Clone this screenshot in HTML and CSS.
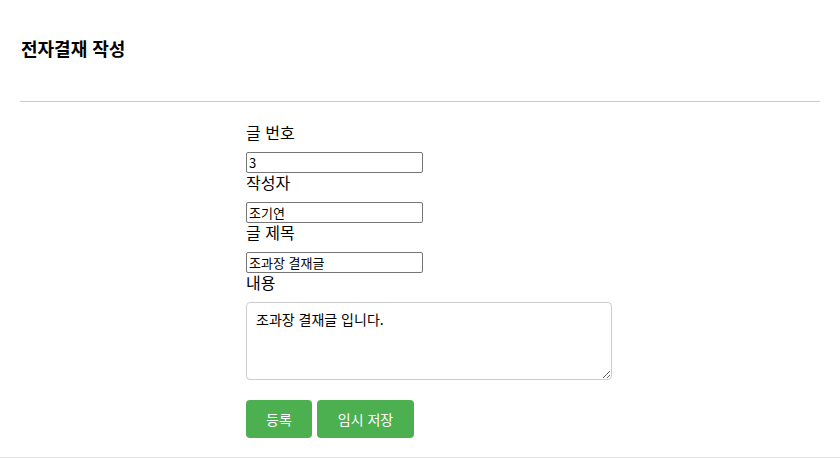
FILE: index.html
```html
<!DOCTYPE html>
<html lang="ko">
<head>
    <meta charset="UTF-8">
    <meta name="viewport" content="width=device-width, initial-scale=1.0">
    <title>전자결재 작성</title>
    <link rel="stylesheet" href="styles.css">
</head>
<body>
    <div class="header">
        <h2>전자결재 작성</h2>
    </div>
    <form id="approvalForm" class="approval-form">
        <label for="boardNo">글 번호</label>
        <input type="text" id="boardNo" value="3">

        <label for="writer">작성자</label>
        <input type="text" id="writer" value="조기연">

        <label for="title">글 제목</label>
        <input type="text" id="title" value="조과장 결재글">

        <label for="content">내용</label>
        <textarea id="content">조과장 결재글 입니다.</textarea>

        <div class="btn-group">
            <button type="button" class="btn">등록</button>
            <button type="button" class="btn btn-wide">임시 저장</button>
        </div>
    </form>
    <div class="footer"></div>
</body>
</html>
```

FILE: styles.css
```css
body {
    font-family: "Noto Sans CJK KR", "Noto Sans", sans-serif;
    margin: 0;
    color: #000;
    background: #fff;
}
.header {
    margin: 0 20px;
    padding: 36px 0 41px;
    border-bottom: 1px solid #cccccc;
}
.header h2 {
    margin: 0;
    padding-left: 1px;
    font-size: 18px;
    line-height: 24px;
    font-weight: bold;
}
.approval-form {
    margin: 21px 0 0 246px;
}
label {
    display: block;
    font-size: 16px;
    line-height: 19px;
    margin-bottom: 10px;
}
input[type="text"] {
    display: block;
    width: 177px;
    height: 21px;
    box-sizing: border-box; /* 테두리까지 포함 */
    padding: 0 2px;
    margin: 0;
    border: 1px solid #767676;
    border-radius: 2px;
    font-family: "Noto Sans CJK KR", sans-serif;
    font-size: 13px;
    line-height: 19px;
}
textarea {
    display: block;
    width: 366px;
    height: 78px;
    box-sizing: border-box;
    padding: 7px 9px;
    border: 1px solid #cccccc;
    border-radius: 4px;
    font-family: "Noto Sans CJK KR", sans-serif;
    font-size: 14px;
    line-height: 18px;
    resize: both;
}
.btn-group {
    display: flex;
    gap: 5px;
    margin-top: 20px;
}
.btn {
    height: 38px;
    padding: 0 20px;
    background-color: #4CAF50;
    color: white;
    border: none;
    border-radius: 4px;
    font-family: "Noto Sans CJK KR", sans-serif;
    font-size: 14px;
    cursor: pointer;
}
.btn-wide {
    padding: 0 21px;
}
.btn:hover {
    background-color: #45a049;
}
.footer {
    margin-top: 19px;
    border-top: 1px solid #e5e5e5;
}
```
